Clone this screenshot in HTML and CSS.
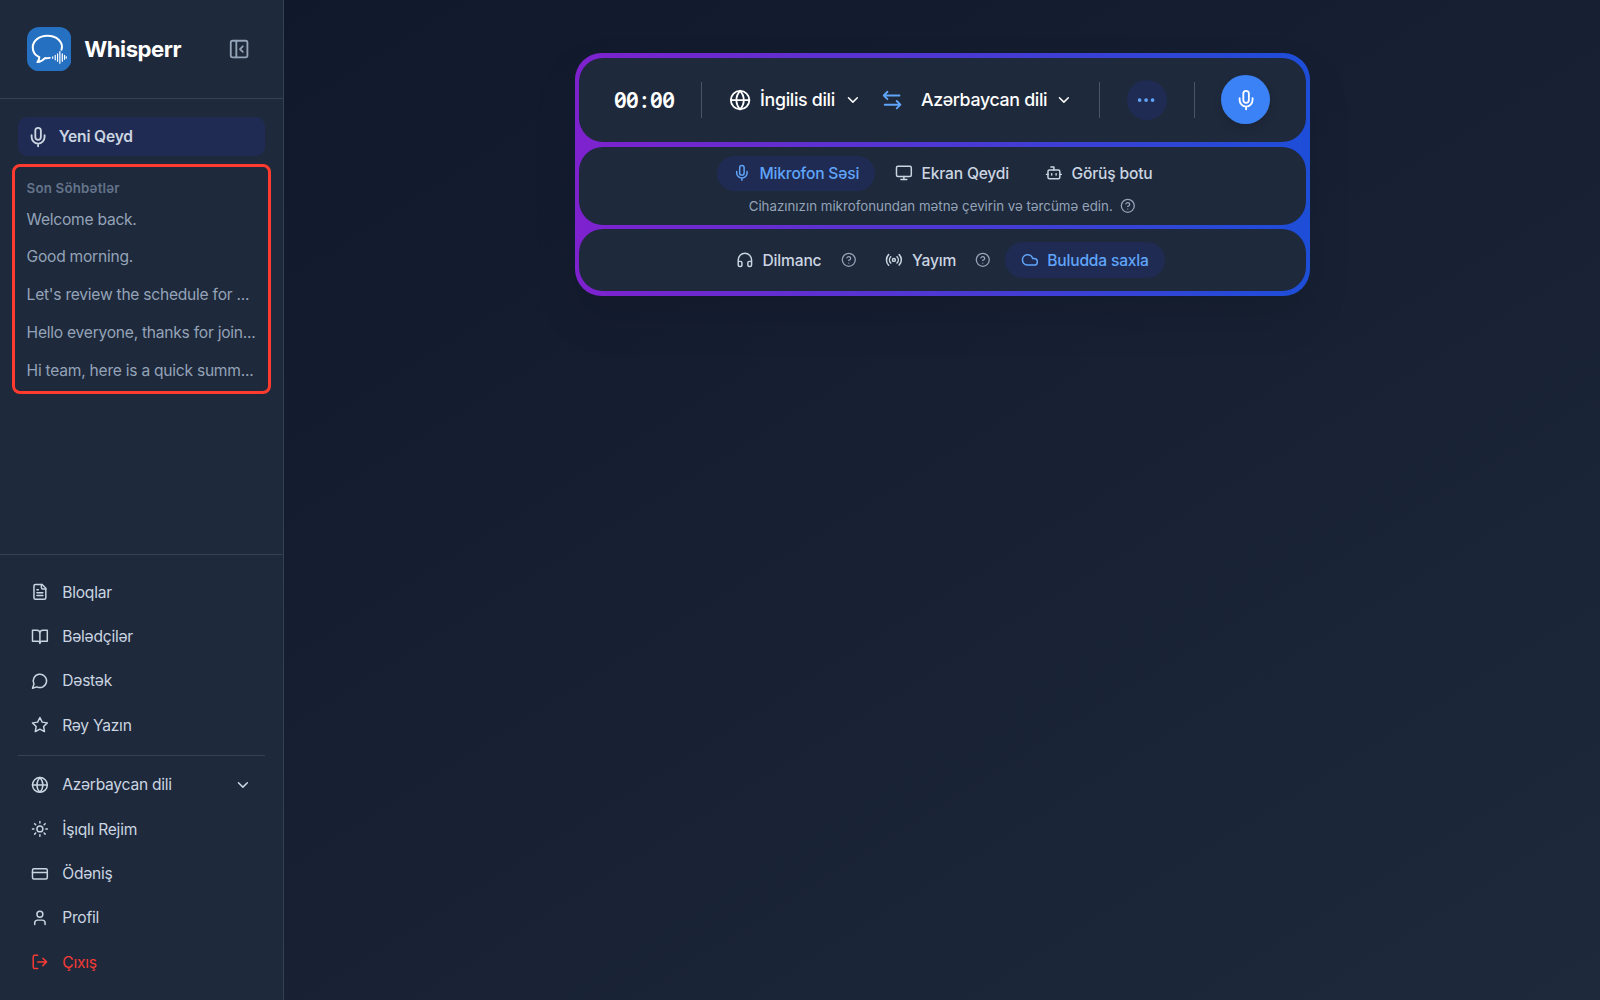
FILE: index.html
```html
<!DOCTYPE html>
<html lang="az">
<head>
  <meta charset="UTF-8">
  <title>Whisperr</title>
  <link rel="stylesheet" href="styles.css">
</head>
<body>
  <!-- shared icons -->
  <svg class="sprite">
    <symbol id="i-mic" viewBox="0 0 24 24"><path d="M12 19v3M19 10v2a7 7 0 0 1-14 0v-2"/><rect x="9" y="2" width="6" height="13" rx="3"/></symbol>
    <symbol id="i-globe" viewBox="0 0 24 24"><circle cx="12" cy="12" r="10"/><path d="M12 2a14.5 14.5 0 0 0 0 20 14.5 14.5 0 0 0 0-20M2 12h20"/></symbol>
    <symbol id="i-chevron" viewBox="0 0 24 24"><path d="m6 9 6 6 6-6"/></symbol>
    <symbol id="i-help" viewBox="0 0 24 24"><circle cx="12" cy="12" r="10"/><path d="M9.09 9a3 3 0 0 1 5.83 1c0 2-3 3-3 3M12 17h.01"/></symbol>
  </svg>

  <aside class="sidebar">
    <header class="brand">
      <svg class="logo" viewBox="0 0 44 44">
        <rect width="44" height="44" rx="12" fill="#2570c0"/>
        <path d="M34.2 22.5C36.5 14.5 29 8.7 20.2 8.7 12 8.7 5.7 13.7 5.7 20.2c0 4.4 2.7 7.8 6.5 9.6 0 2.3-.7 3.8-1.9 5 3.4-.3 5.5-1.8 7.500-4 1.700.2 3 .1 4.700-.2" fill="none" stroke="#fff" stroke-width="2" stroke-linecap="round" stroke-linejoin="round"/>
        <path d="M25.500 29.500v1.500M28 28v4.500M30.300 26.500v7.500M32.600 24.500v11.500M35 26.500v7.500M37.200 28v4M38.900 29.500v1.300" stroke="#fff" stroke-width="1.200" stroke-linecap="round"/>
      </svg>
      <h1>Whisperr</h1>
      <svg class="icon icon-lg toggle" viewBox="0 0 24 24"><rect x="3" y="3" width="18" height="18" rx="2"/><path d="M9 3v18M16 15l-3-3 3-3"/></svg>
    </header>

    <div class="history">
      <a class="new-note"><svg class="icon icon-lg"><use href="#i-mic"/></svg><span>Yeni Qeyd</span></a>
      <div class="recent">
        <h2>Son Söhbətlər</h2>
        <a>Welcome back.</a>
        <a>Good morning.</a>
        <a>Let's review the schedule for ...</a>
        <a>Hello everyone, thanks for join...</a>
        <a>Hi team, here is a quick summ...</a>
      </div>
    </div>

    <nav class="menu">
      <a><svg class="icon" viewBox="0 0 24 24"><path d="M15 2H6a2 2 0 0 0-2 2v16a2 2 0 0 0 2 2h12a2 2 0 0 0 2-2V7Z"/><path d="M14 2v4a2 2 0 0 0 2 2h4M10 9H8M16 13H8M16 17H8"/></svg><span>Bloqlar</span></a>
      <a><svg class="icon" viewBox="0 0 24 24"><path d="M12 6v15M2 3h6a4 4 0 0 1 4 4 4 4 0 0 1 4-4h6v15h-7a3 3 0 0 0-3 3 3 3 0 0 0-3-3H2z"/></svg><span>Bələdçilər</span></a>
      <a><svg class="icon" viewBox="0 0 24 24"><path d="M7.9 20A9 9 0 1 0 4 16.1L2 22Z"/></svg><span>Dəstək</span></a>
      <a><svg class="icon" viewBox="0 0 24 24"><path d="m12 2 3.09 6.26L22 9.27l-5 4.87 1.18 6.88L12 17.77l-6.180 3.250L7 14.140 2 9.270l6.910-1.010z"/></svg><span>Rəy Yazın</span></a>
      <hr>
      <a><svg class="icon"><use href="#i-globe"/></svg><span>Azərbaycan dili</span><svg class="icon end"><use href="#i-chevron"/></svg></a>
      <a><svg class="icon" viewBox="0 0 24 24"><circle cx="12" cy="12" r="4"/><path d="M12 2v2M12 20v2M4.930 4.930l1.410 1.410M17.660 17.660l1.410 1.410M2 12h2M20 12h2M6.340 17.660l-1.410 1.410M19.070 4.930l-1.410 1.410"/></svg><span>İşıqlı Rejim</span></a>
      <a><svg class="icon" viewBox="0 0 24 24"><rect x="2" y="5" width="20" height="14" rx="2"/><path d="M2 10h20"/></svg><span>Ödəniş</span></a>
      <a><svg class="icon" viewBox="0 0 24 24"><path d="M19 21v-2a4 4 0 0 0-4-4H9a4 4 0 0 0-4 4v2"/><circle cx="12" cy="7" r="4"/></svg><span>Profil</span></a>
      <a class="logout"><svg class="icon" viewBox="0 0 24 24"><path d="M9 21H5a2 2 0 0 1-2-2V5a2 2 0 0 1 2-2h4M16 17l5-5-5-5M21 12H9"/></svg><span>Çıxış</span></a>
    </nav>
  </aside>

  <main class="content">
    <section class="panel">
      <div class="row controls">
        <span class="timer">00<i>:</i>00</span>
        <span class="sep"></span>
        <button class="lang source"><svg class="icon icon-lg"><use href="#i-globe"/></svg><span>İngilis dili</span><svg class="icon chev"><use href="#i-chevron"/></svg></button>
        <svg class="icon icon-lg swap" viewBox="0 0 24 24"><path d="M7 3 3 7l4 4M3 7h17M17 21l4-4-4-4M21 17H4"/></svg>
        <button class="lang target"><span>Azərbaycan dili</span><svg class="icon chev"><use href="#i-chevron"/></svg></button>
        <span class="sep"></span>
        <button class="more"><svg class="icon icon-lg" viewBox="0 0 24 24"><circle cx="12" cy="12" r="1"/><circle cx="19" cy="12" r="1"/><circle cx="5" cy="12" r="1"/></svg></button>
        <span class="sep"></span>
        <button class="record"><svg class="icon icon-lg"><use href="#i-mic"/></svg></button>
      </div>

      <div class="row sources">
        <div class="tabs">
          <button class="chip active mic-chip"><svg class="icon"><use href="#i-mic"/></svg><span>Mikrofon Səsi</span></button>
          <button class="chip screen-chip"><svg class="icon" viewBox="0 0 24 24"><rect x="2" y="3" width="20" height="14" rx="2"/><path d="M8 21h8M12 17v4"/></svg><span>Ekran Qeydi</span></button>
          <button class="chip bot-chip"><svg class="icon" viewBox="0 0 24 24"><path d="M12 8V4H8"/><rect x="4" y="8" width="16" height="12" rx="2"/><path d="M2 14h2M20 14h2M15 13v2M9 13v2"/></svg><span>Görüş botu</span></button>
        </div>
        <p class="hint"><span>Cihazınızın mikrofonundan mətnə çevirin və tərcümə edin.</span><svg class="icon help"><use href="#i-help"/></svg></p>
      </div>

      <div class="row options">
        <button class="chip dub"><svg class="icon" viewBox="0 0 24 24"><path d="M3 14h3a2 2 0 0 1 2 2v3a2 2 0 0 1-2 2H5a2 2 0 0 1-2-2v-7a9 9 0 0 1 18 0v7a2 2 0 0 1-2 2h-1a2 2 0 0 1-2-2v-3a2 2 0 0 1 2-2h3"/></svg><span>Dilmanc</span></button>
        <svg class="icon help"><use href="#i-help"/></svg>
        <button class="chip live"><svg class="icon" viewBox="0 0 24 24"><path d="M4.900 19.100C1 15.200 1 8.800 4.900 4.900M7.800 16.200c-2.300-2.300-2.300-6.100 0-8.500M16.200 7.800c2.300 2.300 2.300 6.100 0 8.500M19.100 4.900C23 8.800 23 15.100 19.100 19"/><circle cx="12" cy="12" r="2"/></svg><span>Yayım</span></button>
        <svg class="icon help"><use href="#i-help"/></svg>
        <button class="chip active cloud-chip"><svg class="icon" viewBox="0 0 24 24"><path d="M17.500 19H9a7 7 0 1 1 6.710-9h1.790a4.500 4.500 0 1 1 0 9Z"/></svg><span>Buludda saxla</span></button>
      </div>
    </section>
  </main>
</body>
</html>
```

FILE: styles.css
```css
* {
  box-sizing: border-box;
}

body {
  margin: 0;
  height: 100vh;
  display: flex;
  overflow: hidden;
  font-family: Inter, sans-serif;
  font-size: 15.6px;
  color: #cbd5e1;
  background: linear-gradient(to bottom right, #0f172a, #1e293b);
}

h1, h2, p {
  margin: 0;
}

button {
  border: none;
  background: none;
  padding: 0;
  font: inherit;
  color: inherit;
}

span {
  white-space: nowrap;
}

.sprite {
  display: none;
}

.icon {
  width: 17.8px;
  height: 17.8px;
  flex: none;
  fill: none;
  stroke: currentColor;
  stroke-width: 2;
  stroke-linecap: round;
  stroke-linejoin: round;
}

.icon-lg {
  width: 22.2px;
  height: 22.2px;
}

/* Sidebar */
.sidebar {
  width: 284px;
  flex: none;
  display: flex;
  flex-direction: column;
  background: #1e293b;
  border-right: 1px solid #334155;
}

.brand {
  height: 99px;
  flex: none;
  display: flex;
  align-items: center;
  padding: 0 33px 0 26.6px;
  border-bottom: 1px solid #334155;
}

.logo {
  width: 44.4px;
  height: 44.4px;
  margin-right: 13.3px;
}

.brand h1 {
  padding-bottom: 2px;
  font-size: 22.2px;
  font-weight: 700;
  letter-spacing: -0.5px;
  color: #fff;
}

.toggle {
  margin-left: auto;
  color: #94a3b8;
}

.history {
  flex: 1;
  padding: 18px 12px 0;
}

.new-note {
  display: flex;
  align-items: center;
  gap: 10px;
  height: 39.4px;
  margin: 0 6px 7.6px;
  padding-left: 8.5px;
  border-radius: 9px;
  font-weight: 600;
  letter-spacing: -0.2px;
  background: #1f2b52;
}

.recent {
  height: 230px;
  padding: 10.6px 11px 0 11.6px;
  border: 3.4px solid #ff3b30;
  border-radius: 8px;
}

.recent h2 {
  font-size: 13.3px;
  font-weight: 600;
  line-height: 20px;
  letter-spacing: 0.2px;
  margin-bottom: 3px;
  color: #64748b;
}

.recent a {
  display: block;
  line-height: 37.8px;
  letter-spacing: -0.25px;
  white-space: nowrap;
  color: #94a3b8;
}

.menu {
  height: 446.5px;
  flex: none;
  padding: 15.5px 18px 0;
  border-top: 1px solid #334155;
  letter-spacing: -0.25px;
}

.menu a {
  display: flex;
  align-items: center;
  gap: 13.2px;
  height: 44.4px;
  padding: 0 13.3px;
}

.menu hr {
  height: 1px;
  margin: 7px 0;
  border: none;
  background: #334155;
}

.menu .end {
  margin-left: auto;
}

.menu .logout {
  color: #f63b35;
}

/* Recorder panel */
.content {
  flex: 1;
  padding: 53.3px 0 0 290.5px;
}

.panel {
  width: 735.6px;
  display: flex;
  flex-direction: column;
  gap: 4.4px;
  padding: 4.4px;
  border-radius: 26.7px;
  background: linear-gradient(to right, #7e22ce, #1d4ed8);
  box-shadow: 0 22px 44px rgba(0, 0, 0, 0.12);
}

.row {
  border-radius: 24px;
  background: #1e293b;
}

.controls {
  height: 84.5px;
  display: flex;
  align-items: center;
  padding-left: 35px;
  color: #fff;
}

.timer {
  width: 60px;
  margin-right: 27px;
  font-family: "Noto Sans", sans-serif;
  font-size: 22.2px;
  font-weight: 600;
  letter-spacing: -0.6px;
  font-feature-settings: "zero";
}

.timer i {
  display: inline-block;
  width: 12px;
  font-style: normal;
  text-align: center;
}

.sep {
  width: 1px;
  height: 36px;
  background: #475569;
}

.lang {
  display: flex;
  align-items: center;
  font-size: 17.8px;
  font-weight: 500;
  letter-spacing: -0.33px;
}

.source {
  width: 133px;
  margin-left: 27px;
  gap: 9px;
}

.target {
  width: 151.5px;
  margin-left: 18px;
}

.chev {
  margin-left: auto;
}

.swap {
  margin-left: 19px;
  color: #60a5fa;
}

.target + .sep {
  margin-left: 26.5px;
}

.more,
.record {
  display: grid;
  place-items: center;
  border-radius: 50%;
}

.more {
  width: 40px;
  height: 40px;
  margin: 0 27px 0 26.5px;
  color: #60a5fa;
  background: #1f2b52;
}

.record {
  width: 49px;
  height: 49px;
  margin-left: 26.6px;
  background: #3b82f6;
  box-shadow: 0 4px 8px rgba(0, 0, 0, 0.12);
}

.chip {
  display: flex;
  align-items: center;
  gap: 8.8px;
  height: 35.5px;
  padding: 0 16px;
  border-radius: 18px;
  font-size: 15.6px;
  font-weight: 500;
  letter-spacing: -0.18px;
}

.chip.active {
  color: #60a5fa;
  background: #1f2b52;
}

.sources {
  height: 78px;
  padding-top: 9px;
}

.tabs {
  display: flex;
  padding-left: 138px;
}

.mic-chip {
  width: 158px;
}

.screen-chip {
  width: 154px;
  padding-left: 20px;
}

.hint {
  display: flex;
  align-items: center;
  justify-content: center;
  gap: 7.6px;
  margin-top: 5px;
  font-size: 13.3px;
  line-height: 20px;
  color: #94a3b8;
}

.help {
  width: 15.6px;
  height: 15.6px;
  color: #94a3b8;
}

.options {
  height: 62.5px;
  display: flex;
  align-items: center;
  padding-left: 141px;
}

.dub {
  width: 121.5px;
}

.live {
  width: 106px;
  margin-left: 12.5px;
}

.live + .help {
  margin-right: 13.5px;
}
```
